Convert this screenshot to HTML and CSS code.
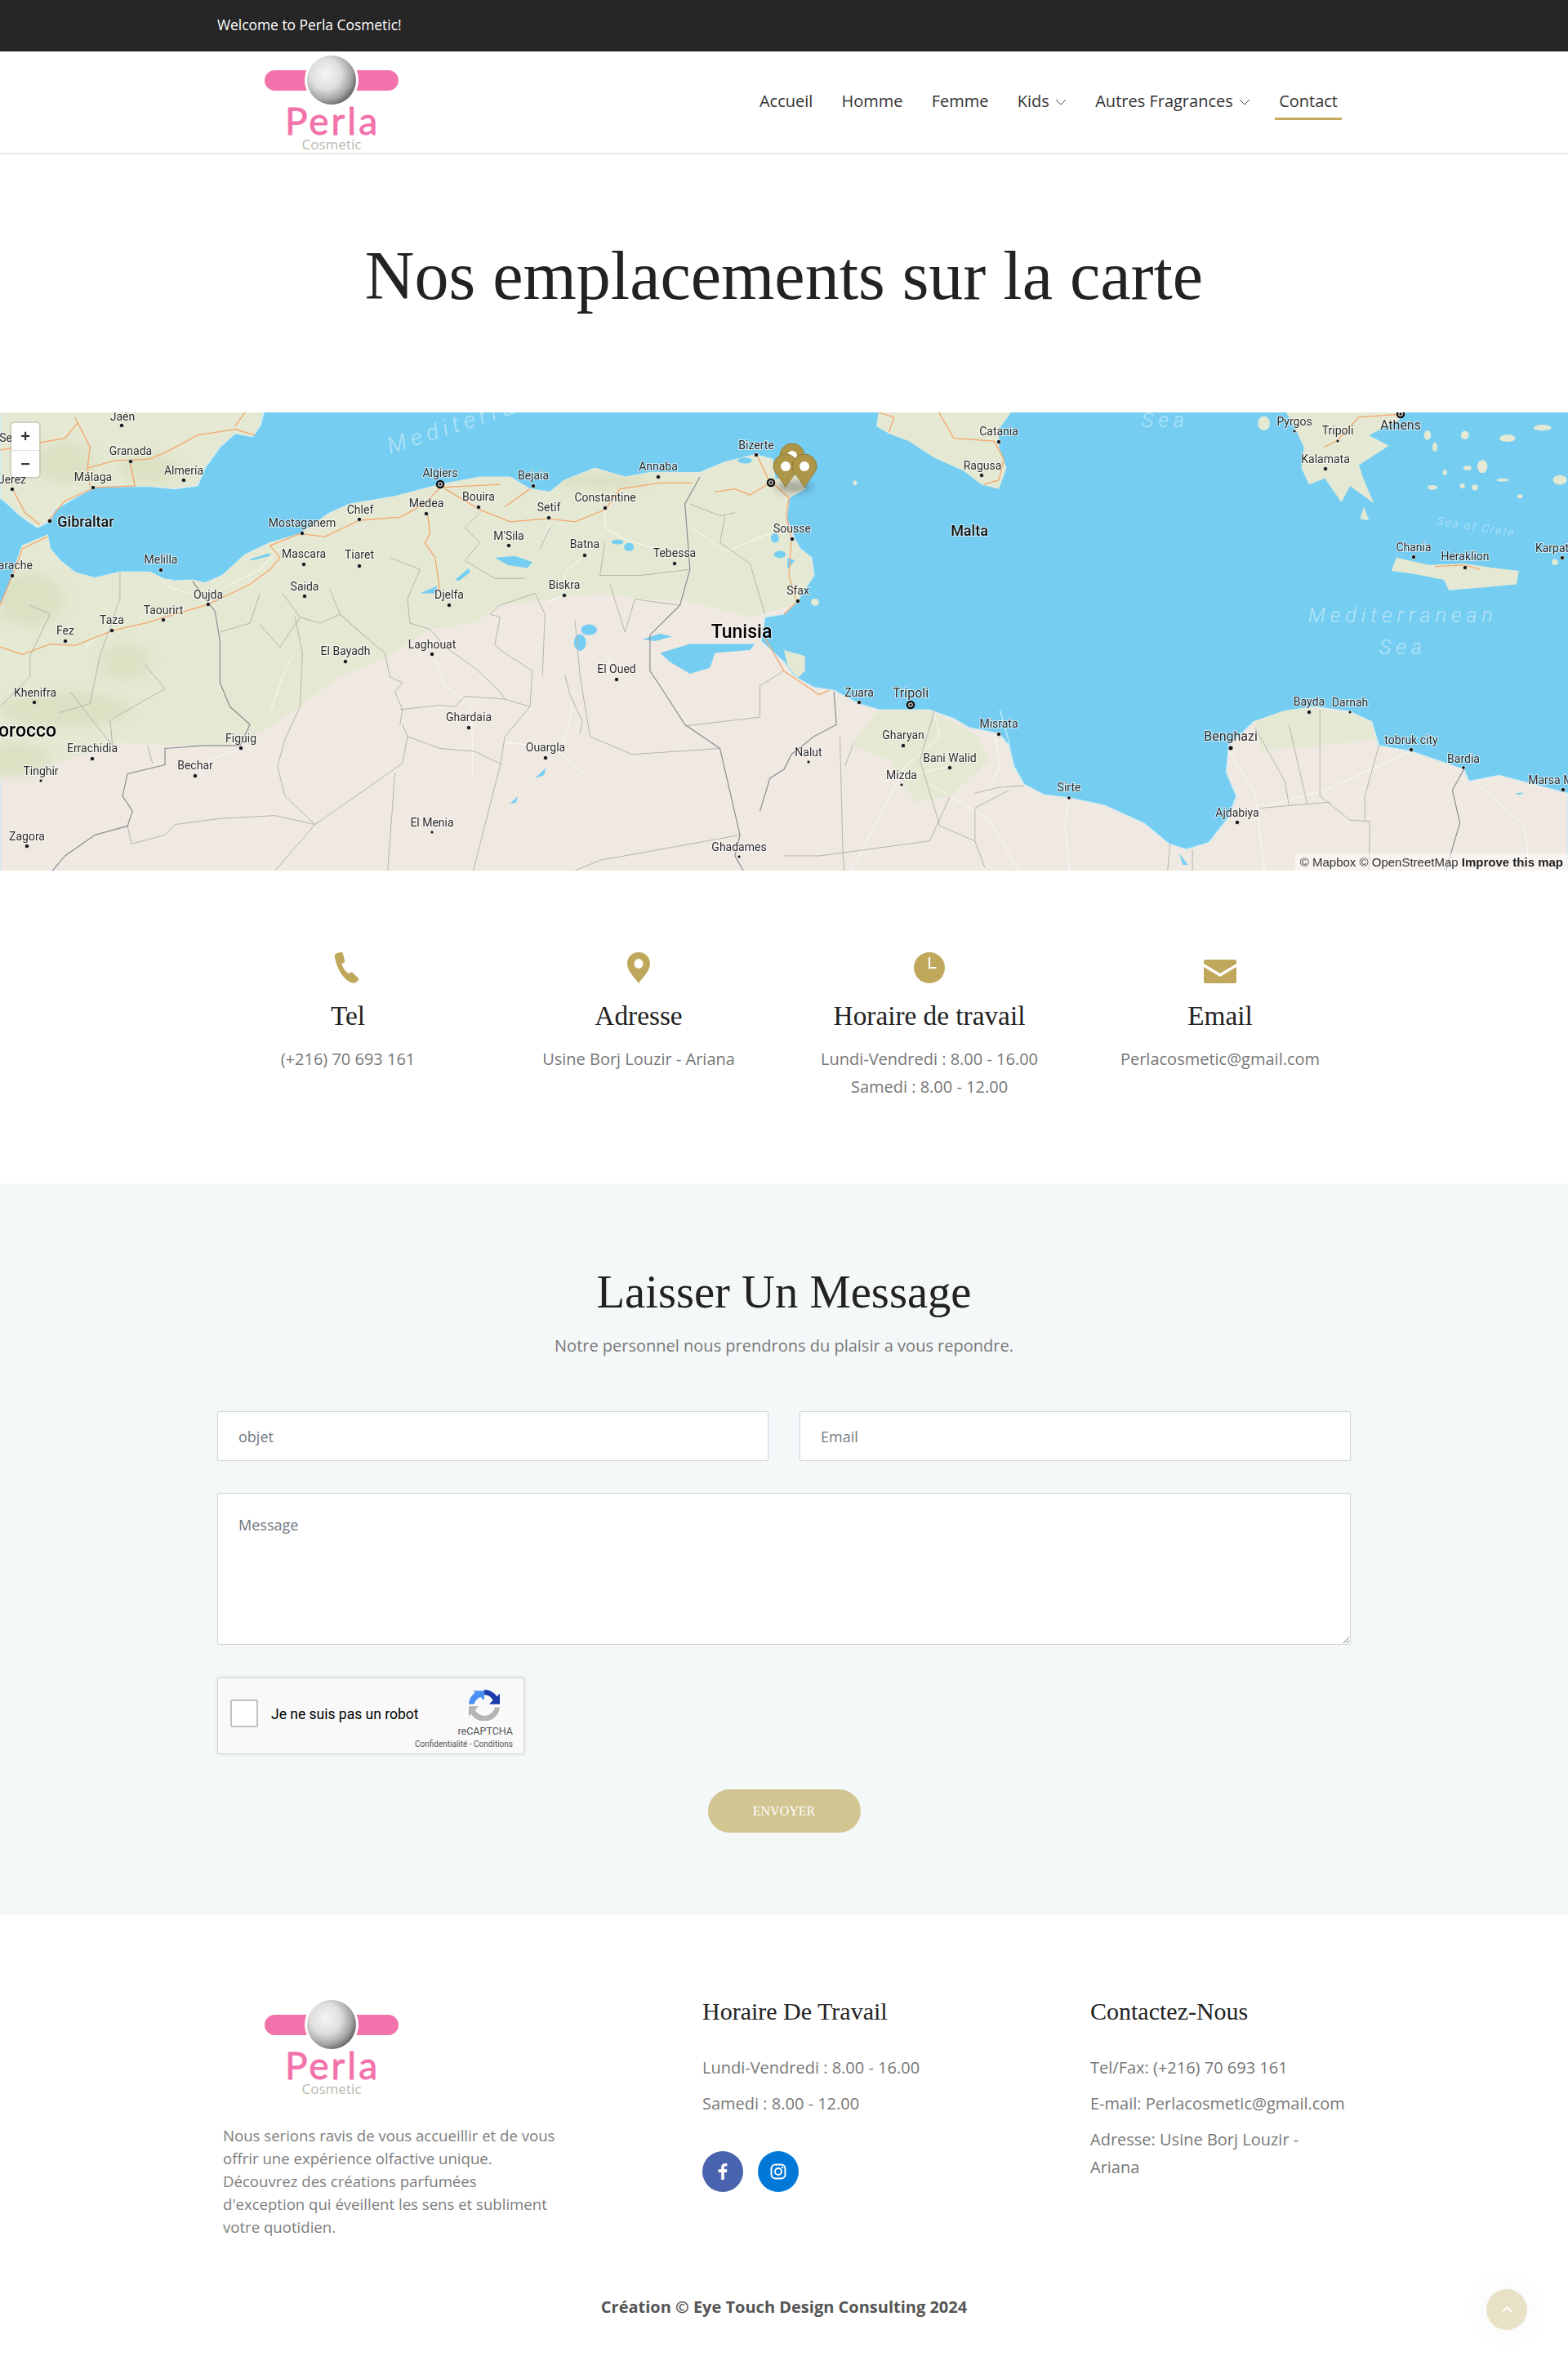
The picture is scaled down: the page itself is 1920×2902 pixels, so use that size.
FILE: index.html
```html
<!DOCTYPE html>
<html lang="fr">
<head>
  <meta charset="UTF-8">
  <meta name="viewport" content="width=device-width, initial-scale=1.0">
  <title>Contact - Perla Cosmetic</title>
  <link rel="stylesheet" href="styles.css">
</head>
<body>
  <div class="topbar"><div class="wrap">Welcome to Perla Cosmetic!</div></div>

  <header class="header">
    <div class="wrap header-row">
      <svg class="logo" viewBox="300 63 200 125">
        <defs>
          <radialGradient id="pearl" cx="38%" cy="38%" r="70%">
            <stop offset="0" stop-color="#f6f6f6"/>
            <stop offset=".45" stop-color="#dedede"/>
            <stop offset=".75" stop-color="#a5a5a5"/>
            <stop offset="1" stop-color="#555"/>
          </radialGradient>
        </defs>
        <rect class="logo-pill" x="324" y="86" width="70" height="25" rx="12.5"/>
        <rect class="logo-pill" x="418" y="86" width="70" height="25" rx="12.5"/>
        <circle class="logo-halo" cx="406" cy="98" r="33"/>
        <circle cx="406" cy="98" r="30" fill="url(#pearl)"/>
        <text class="logo-name" x="407" y="165">Perla</text>
        <text class="logo-sub" x="406" y="183">Cosmetic</text>
      </svg>
      <nav class="nav">
        <a href="#">Accueil</a>
        <a href="#">Homme</a>
        <a href="#">Femme</a>
        <a href="#">Kids <svg class="caret" viewBox="0 0 14 8"><path d="M1 1l6 6 6-6"/></svg></a>
        <a href="#">Autres Fragrances <svg class="caret" viewBox="0 0 14 8"><path d="M1 1l6 6 6-6"/></svg></a>
        <a href="#" class="active">Contact</a>
      </nav>
    </div>
  </header>

  <section class="hero"><h1>Nos emplacements sur la carte</h1></section>

  <section class="map">
    <svg class="map-svg" viewBox="0 505 1920 561">
      <defs>
        <path id="landShape" d="M0 660L20 590 30 530 45 460 95 425 100 470 120 510 150 550 190 568 240 548 300 548 325 570 350 578 385 575 410 585 445 560 490 490 540 450 600 420 660 350 700 320 790 295 880 255 960 230 1020 230 1060 270 1100 280 1130 240 1190 200 1250 230 1300 215 1400 215 1450 180 1510 155 1545 170 1550 240 1590 215 1610 270 1578 300 1573 370 1590 440 1600 470 1623 500 1628 560 1608 610 1593 650 1568 690 1530 700 1522 780 1568 850 1590 900 1628 935 1668 945 1718 990 1758 1010 1818 1010 1858 1010 1908 1040 1938 1070 1998 1090 2018 1130 2028 1200 2048 1260 2088 1295 2138 1305 2208 1330 2288 1390 2338 1460 2373 1478 2418 1455 2458 1370 2473 1300 2453 1220 2458 1130 2508 1050 2568 1015 2628 1000 2698 1015 2743 1050 2758 1130 2823 1150 2928 1210 2938 1250 2998 1230 3136 1290V1560H0Z"/>
        <path id="spainShape" d="M0 0H530L520 60 505 95 470 85 440 130 410 200 395 260 350 270 300 262 270 262 190 265 150 300 110 340 100 378 75 400 40 360 15 320 0 300Z"/>
        <clipPath id="landClip"><use href="#landShape"/></clipPath>
        <clipPath id="spainClip"><use href="#spainShape"/></clipPath>
        <filter id="soft"><feGaussianBlur stdDeviation="14"/></filter>
        <filter id="pinShadow" x="-50%" y="-50%" width="200%" height="200%"><feGaussianBlur stdDeviation="4"/></filter>
      </defs>
      <rect class="sea" x="0" y="505" width="1920" height="561"/>
      <g transform="translate(0 500) scale(.6122 .3653)">
        <use class="land" href="#landShape"/>
        <use class="land green-land" href="#spainShape"/>
        <g clip-path="url(#landClip)">
          <path class="green" d="M0 1240L130 1180 240 1120 330 1130 450 1130 520 1090 600 1000 680 900 780 830 860 740 950 720 1000 660 1100 640 1200 620 1280 640 1360 640 1500 700 1568 670 1700 600V150H0Z"/>
          <path class="green" d="M1758 1010L1840 1000 1950 1090 1980 1180 1900 1300 1830 1320 1780 1180 1700 1130Z"/>
          <path class="green" d="M2510 1040L2600 1000 2740 1030 2760 1110 2640 1130 2520 1150Z"/>
          <g filter="url(#soft)">
            <ellipse class="shade" cx="60" cy="640" rx="70" ry="90"/>
            <ellipse class="shade" cx="130" cy="1010" rx="130" ry="60"/>
            <ellipse class="shade" cx="30" cy="1180" rx="70" ry="60"/>
            <ellipse class="shade" cx="250" cy="850" rx="50" ry="60"/>
            <ellipse class="shade" cx="1200" cy="240" rx="100" ry="30"/>
          </g>
        </g>
        <g clip-path="url(#spainClip)">
          <g filter="url(#soft)">
            <ellipse class="shade" cx="300" cy="200" rx="60" ry="50"/>
            <ellipse class="shade" cx="130" cy="180" rx="60" ry="70"/>
          </g>
        </g>
        <!-- sicily, greece, crete and the small islands -->
        <path class="green" d="M1758 0L1753 60 1778 85 1818 110 1868 165 1928 210 1963 255 1998 270 2013 200 1998 130 1998 70 2028 0Z"/>
        <path class="green" d="M2568 0L2588 60 2608 130 2603 200 2618 255 2650 235 2683 315 2700 260 2748 318 2728 240 2718 190 2778 125 2738 90 2798 40 2818 0Z"/>
        <path class="green" d="M2728 330L2738 375 2720 370Z"/>
        <path class="green" d="M2783 545L2793 500 2858 525 2928 520 2988 535 3038 545 3033 590 2968 600 2898 610 2888 575 2828 555Z"/>
        <path class="green" d="M1568 810L1610 830 1610 880 1595 905 1575 860Z"/>
        <g class="isle">
          <ellipse cx="2528" cy="50" rx="12" ry="24"/><ellipse cx="2855" cy="90" rx="7" ry="16"/><ellipse cx="2930" cy="90" rx="8" ry="14"/>
          <ellipse cx="2965" cy="195" rx="10" ry="22"/><ellipse cx="3015" cy="100" rx="16" ry="12"/><ellipse cx="2870" cy="130" rx="5" ry="16"/>
          <ellipse cx="2935" cy="200" rx="8" ry="8"/><ellipse cx="2890" cy="215" rx="4" ry="10"/><ellipse cx="3005" cy="240" rx="12" ry="5"/>
          <ellipse cx="2950" cy="265" rx="6" ry="10"/><ellipse cx="2865" cy="265" rx="10" ry="8"/><ellipse cx="3085" cy="65" rx="18" ry="10"/>
          <ellipse cx="3120" cy="240" rx="14" ry="16"/><ellipse cx="3040" cy="295" rx="5" ry="7"/><ellipse cx="2925" cy="260" rx="5" ry="8"/>
          <ellipse cx="1710" cy="250" rx="4" ry="8"/><ellipse cx="1630" cy="650" rx="8" ry="12"/><ellipse cx="3110" cy="515" rx="6" ry="10"/>
        </g>
        <!-- lakes -->
        <g class="water">
          <path d="M1320 820L1380 790 1420 790 1510 790 1500 810 1430 820 1420 870 1380 890 1340 850Z"/>
          <path d="M990 500L1030 495 1065 515 1055 535 1015 525Z"/>
          <ellipse cx="1178" cy="742" rx="16" ry="18"/><ellipse cx="1160" cy="785" rx="12" ry="28"/>
          <path d="M1285 775L1320 755 1345 765 1310 780Z"/>
          <path d="M910 575L938 535 940 550 918 578Z"/><path d="M840 620L875 595 870 620Z"/>
          <ellipse cx="1258" cy="465" rx="10" ry="14"/><ellipse cx="1235" cy="448" rx="12" ry="8"/>
          <path d="M500 505L540 485 540 495 505 510Z"/><path d="M1070 1240L1092 1205 1088 1230Z"/>
          <path d="M1020 1325L1036 1300 1032 1322Z"/><path d="M3030 1290L3048 1288 3040 1296Z"/>
          <path d="M2358 1490L2376 1530 2366 1530Z"/><ellipse cx="1490" cy="175" rx="14" ry="10"/>
          <ellipse cx="1560" cy="490" rx="12" ry="12"/><ellipse cx="1550" cy="435" rx="8" ry="16"/>
          <path d="M1575 500L1590 510 1575 540Z"/>
        </g>
        <!-- minor roads -->
        <g class="minor">
          <polyline points="320,570 340,600 380,620 417,660"/><polyline points="1100,380 1090,430"/><polyline points="1210,340 1210,400 1250,440 1310,470"/>
          <polyline points="1170,490 1130,550 1128,625 1095,650"/><polyline points="870,840 890,930 940,990 945,1100 945,1230"/>
          <polyline points="1130,1120 1110,1140 1168,1225"/><polyline points="1145,1000 1125,1140 1010,1120"/><polyline points="480,1140 420,1180 400,1230"/>
          <polyline points="585,830 560,920 540,1020"/><polyline points="1215,830 1230,905"/><polyline points="240,650 215,740 170,800"/>
          <polyline points="1990,1090 2000,1200 1970,1300"/><polyline points="1868,1010 1880,1100 1810,1200 1700,1560"/><polyline points="2138,1305 2130,1400 2140,1560"/>
          <polyline points="2458,1150 2510,1290 2530,1560"/><polyline points="2820,1150 2650,1280 2520,1340"/><polyline points="2950,1250 3050,1400 3060,1560"/>
          <polyline points="1860,1260 1980,1380 2040,1560"/><polyline points="2000,1010 2020,1130"/><polyline points="1770,1250 1900,1200"/>
          <polyline points="450,600 520,540 560,470"/><polyline points="1385,400 1450,480 1540,420"/>
        </g>
        <!-- provinces -->
        <g class="border-thin">
          <polyline points="240,550 240,640 200,830 180,990 120,1020"/><polyline points="60,660 100,690 60,830 60,900 0,1000"/><polyline points="220,1040 225,1130 140,950"/><polyline points="290,860 330,940 225,1040"/>
          <polyline points="520,620 500,720 440,750"/><polyline points="520,725 560,800 600,700 640,720 680,690 720,750 770,820 780,900 805,920 790,950 805,1010 800,1060"/>
          <polyline points="565,620 600,700"/><polyline points="660,610 680,690 720,750"/><polyline points="780,500 840,540 815,640 820,720 860,740 890,800 950,870 1000,950 1010,975"/>
          <polyline points="1060,1000 1065,880 1000,810 990,790 1000,700 980,690 1000,660 1070,620 1090,690"/><polyline points="1090,690 1085,895"/>
          <polyline points="960,350 930,400 960,450 930,510 990,570 1050,570"/><polyline points="1220,590 1250,750 1270,640 1360,660"/><polyline points="1210,450 1200,560 1280,560 1380,540"/>
          <polyline points="1100,400 1080,470"/><polyline points="1150,710 1160,895 1180,1100 1265,1160 1440,1140"/><polyline points="1130,895 1140,960 1165,1050 1160,1090"/>
          <polyline points="1370,1065 1520,1035 1520,930 1568,880"/><polyline points="1480,1430 1200,1515 1135,1560"/><polyline points="1010,1100 1000,1200 945,1560"/>
          <polyline points="800,1010 880,995 910,1000 930,965 1010,975 1060,1000 1010,1100"/><polyline points="805,1060 815,1100 880,1140 950,1150 1005,1195"/>
          <polyline points="815,1100 805,1190 630,1395 545,1560"/><polyline points="790,1220 775,1560"/><polyline points="630,1395 550,1365 440,1375 350,1395 330,1430 263,1460 255,1400"/>
          <polyline points="630,1395 570,1300 555,1200 570,1110 600,1000 605,820 590,700"/><polyline points="295,1130 305,1190"/>
          <polyline points="1450,360 1440,450 1500,520 1530,690"/><polyline points="1380,320 1440,360 1470,350"/><polyline points="1680,1100 1686,1500 1690,1560"/><polyline points="1706,1130 1690,1200"/>
          <polyline points="1870,1010 1840,1180 1880,1400 1950,1450 1970,1540"/><polyline points="1950,1290 2000,1270 2048,1265"/><polyline points="2018,1280 1950,1340 1950,1450"/>
          <polyline points="2510,1070 2570,1250 2578,1330"/><polyline points="2578,1060 2600,1220 2615,1330"/><polyline points="2640,1010 2640,1300 2700,1380 2740,1385 2738,1560"/>
          <polyline points="2520,1340 2660,1320"/><polyline points="2758,1130 2730,1300 2730,1385"/><polyline points="2340,1460 2335,1560"/><polyline points="2385,1480 2385,1560"/>
          <polyline points="1568,1500 1640,1500 1860,1450"/><polyline points="1860,1450 1900,1300"/>
        </g>
        <!-- country borders -->
        <g class="border">
          <polyline points="385,580 430,680 440,780 440,920 460,1000 500,1060 480,1130 410,1130 330,1140 330,1195 255,1225 245,1300 265,1350 255,1400 190,1430 130,1500 100,1560"/>
          <polyline points="1400,230 1370,320 1380,540 1360,660 1300,760 1300,880 1320,930 1370,1060 1440,1140 1480,1430 1470,1500 1490,1560"/>
          <polyline points="1668,950 1673,1060 1628,1100 1583,1160 1568,1210 1540,1240 1520,1350"/>
          <polyline points="2928,1210 2905,1280 2920,1390 2890,1560"/>
        </g>
        <!-- main roads -->
        <g class="road">
          <polyline points="150,30 180,130 175,200 230,175 300,170 340,140 395,90 470,70 510,90"/><polyline points="0,140 80,115 130,100 155,50"/><polyline points="490,14 470,60"/>
          <polyline points="260,180 270,260 190,265 130,310 100,370"/><polyline points="25,270 50,350 80,390"/><polyline points="175,200 180,260"/>
          <polyline points="0,660 30,540 45,470 95,430"/>
          <polyline points="0,800 45,825 100,790 150,795 225,745 290,720 330,700 415,658 500,590 540,540 560,500 540,460 600,420 650,430 720,375 800,365 850,320 880,265 1000,255"/>
          <polyline points="890,270 960,340 1020,380 1095,370 1150,380 1210,340 1240,270 1320,250 1385,250"/>
          <polyline points="855,350 860,420 850,450 870,500 880,610"/><polyline points="1010,330 1060,270"/><polyline points="1430,280 1470,270 1500,290 1540,250 1515,160"/>
          <polyline points="1545,250 1578,300 1573,360 1583,440 1578,560 1593,650 1568,690"/><polyline points="1530,770 1568,880 1638,960 1658,945"/>
          <polyline points="1758,14 1788,30 1778,80"/><polyline points="1878,14 1908,100 1988,110 2008,170 1998,240 1968,255"/>
          <polyline points="2648,130 2673,110 2718,30 2798,20"/>
          <polyline points="2870,530 2930,525 2960,540"/>
        </g>
      </g>

      <g class="labels">
        <text x="150" y="515">Jaén</text><text x="160" y="557">Granada</text><text x="225" y="581">Almería</text><text x="114" y="589">Málaga</text>
        <text x="15" y="592">Jerez</text><text x="7" y="541">Se</text><text x="539" y="584">Algiers</text><text x="653" y="587">Bejaia</text>
        <text x="806" y="576">Annaba</text><text x="926" y="550">Bizerte</text><text x="586" y="613">Bouira</text><text x="741" y="614">Constantine</text>
        <text x="672" y="626">Setif</text><text x="522" y="621">Medea</text><text x="441" y="629">Chlef</text><text x="370" y="645">Mostaganem</text>
        <text x="372" y="683">Mascara</text><text x="440" y="684">Tiaret</text><text x="623" y="661">M'Sila</text><text x="716" y="671">Batna</text>
        <text x="826" y="682">Tebessa</text><text x="197" y="690">Melilla</text><text x="15" y="697">Larache</text><text x="373" y="723">Saida</text>
        <text x="691" y="721">Biskra</text><text x="255" y="733">Oujda</text><text x="550" y="733">Djelfa</text><text x="200" y="752">Taourirt</text>
        <text x="137" y="764">Taza</text><text x="80" y="777">Fez</text><text x="423" y="802">El Bayadh</text><text x="529" y="794">Laghouat</text>
        <text x="755" y="824">El Oued</text><text x="43" y="853">Khenifra</text><text x="574" y="883">Ghardaia</text><text x="295" y="909">Figuig</text>
        <text x="113" y="921">Errachidia</text><text x="668" y="920">Ouargla</text><text x="239" y="942">Bechar</text><text x="50" y="949">Tinghir</text>
        <text x="529" y="1012">El Menia</text><text x="33" y="1029">Zagora</text><text x="905" y="1042">Ghadames</text>
        <text x="970" y="652">Sousse</text><text x="977" y="728">Sfax</text><text x="1223" y="533">Catania</text><text x="1203" y="575">Ragusa</text>
        <text x="1585" y="521">Pyrgos</text><text x="1638" y="532">Tripoli</text><text x="1623" y="567">Kalamata</text><text x="1731" y="675">Chania</text>
        <text x="1794" y="686">Heraklion</text><text x="1912" y="676">Karpathos</text><text x="1052" y="853">Zuara</text><text x="1223" y="891">Misrata</text>
        <text x="1603" y="864">Bayda</text><text x="1653" y="865">Darnah</text><text x="1728" y="911">tobruk city</text><text x="1792" y="934">Bardia</text>
        <text x="1915" y="960">Marsa Matruh</text><text x="1106" y="905">Gharyan</text><text x="990" y="926">Nalut</text><text x="1163" y="933">Bani Walid</text>
        <text x="1104" y="954">Mizda</text><text x="1309" y="969">Sirte</text><text x="1515" y="1000">Ajdabiya</text>
        <text class="label-md" x="105" y="645">Gibraltar</text><text class="label-md" x="1187" y="656">Malta</text>
        <text class="label-city" x="1715" y="526">Athens</text><text class="label-city" x="1115" y="854">Tripoli</text><text class="label-city" x="1507" y="907">Benghazi</text>
        <text class="label-lg" x="908" y="781">Tunisia</text><text class="label-lg label-end" x="69" y="902">Morocco</text>
      </g>
      <g class="sea-labels">
        <text class="sea-lg" x="1718" y="762">Mediterranean</text><text class="sea-lg" x="1718" y="801">Sea</text>
        <text class="sea-lg" x="1427" y="523">Sea</text>
        <text class="sea-top" transform="rotate(-18 478 556)" x="478" y="556">Mediterranean</text>
        <text class="sea-sm" transform="rotate(9 1808 644)" x="1808" y="650">Sea of Crete</text>
      </g>
      <g class="dots">
        <circle cx="149" cy="521" r="2.6"/><circle cx="160" cy="565" r="2.6"/><circle cx="225" cy="588" r="2.6"/><circle cx="114" cy="597" r="2.6"/>
        <circle cx="15" cy="599" r="2.6"/><circle cx="61" cy="638" r="2.8"/><circle cx="653" cy="595" r="2.6"/><circle cx="806" cy="584" r="2.6"/>
        <circle cx="926" cy="557" r="2.6"/><circle cx="586" cy="621" r="2.6"/><circle cx="741" cy="622" r="2.6"/><circle cx="672" cy="634" r="2.6"/>
        <circle cx="522" cy="629" r="2.6"/><circle cx="440" cy="636" r="2.6"/><circle cx="370" cy="653" r="2.6"/><circle cx="372" cy="691" r="2.6"/>
        <circle cx="440" cy="693" r="2.6"/><circle cx="623" cy="668" r="2.6"/><circle cx="716" cy="680" r="2.6"/><circle cx="826" cy="690" r="2.6"/>
        <circle cx="197" cy="698" r="2.6"/><circle cx="15" cy="705" r="2.6"/><circle cx="373" cy="730" r="2.6"/><circle cx="691" cy="729" r="2.6"/>
        <circle cx="255" cy="740" r="2.6"/><circle cx="550" cy="741" r="2.6"/><circle cx="200" cy="759" r="2.6"/><circle cx="137" cy="772" r="2.6"/>
        <circle cx="80" cy="785" r="2.6"/><circle cx="423" cy="810" r="2.6"/><circle cx="529" cy="801" r="2.6"/><circle cx="755" cy="832" r="2.6"/>
        <circle cx="42" cy="860" r="2.6"/><circle cx="574" cy="891" r="2.6"/><circle cx="295" cy="916" r="2.6"/><circle cx="113" cy="929" r="2.6"/>
        <circle cx="668" cy="928" r="2.6"/><circle cx="239" cy="950" r="2.6"/><circle cx="50" cy="956" r="2"/><circle cx="529" cy="1019" r="2"/>
        <circle cx="33" cy="1036" r="2.6"/><circle cx="905" cy="1049" r="2"/><circle cx="970" cy="660" r="2.6"/><circle cx="977" cy="736" r="2.6"/>
        <circle cx="1223" cy="541" r="2.6"/><circle cx="1202" cy="582" r="2.6"/><circle cx="1585" cy="528" r="2"/><circle cx="1638" cy="540" r="2"/>
        <circle cx="1623" cy="574" r="2.6"/><circle cx="1731" cy="682" r="2.6"/><circle cx="1794" cy="695" r="2.6"/><circle cx="1913" cy="683" r="2.6"/>
        <circle cx="1052" cy="860" r="2.6"/><circle cx="1223" cy="899" r="2.6"/><circle cx="1603" cy="872" r="2.6"/><circle cx="1653" cy="872" r="2"/>
        <circle cx="1507" cy="916" r="3"/><circle cx="1728" cy="918" r="2.6"/><circle cx="1792" cy="940" r="2.2"/><circle cx="1914" cy="967" r="2.6"/>
        <circle cx="1106" cy="913" r="2.6"/><circle cx="990" cy="933" r="2"/><circle cx="1163" cy="940" r="2.6"/><circle cx="1104" cy="961" r="2"/>
        <circle cx="1309" cy="977" r="2.2"/><circle cx="1515" cy="1007" r="2.6"/>
      </g>
      <g class="rings">
        <circle cx="539" cy="593" r="4"/><circle cx="944" cy="591" r="4"/><circle cx="1715" cy="507" r="4"/><circle cx="1115" cy="863" r="4"/>
      </g>
      <g class="ring-core">
        <circle cx="539" cy="593" r="1.7"/><circle cx="944" cy="591" r="1.7"/><circle cx="1715" cy="507" r="1.7"/><circle cx="1115" cy="863" r="1.7"/>
      </g>
      <!-- markers -->
      <ellipse class="pin-shadow" cx="972" cy="596" rx="22" ry="7" filter="url(#pinShadow)"/>
      <g class="pin" transform="translate(970 558)"><path d="M0 26C-6 14-15 8-15 0A15 15 0 0 1 15 0C15 8 6 14 0 26Z"/><circle r="6"/></g>
      <g class="pin" transform="translate(962 571)"><path d="M0 26C-6 14-15 8-15 0A15 15 0 0 1 15 0C15 8 6 14 0 26Z"/><circle r="6"/></g>
      <g class="pin" transform="translate(985 571)"><path d="M0 26C-6 14-15 8-15 0A15 15 0 0 1 15 0C15 8 6 14 0 26Z"/><circle r="6"/></g>
    </svg>
    <div class="zoom-ctrl"><button>+</button><button>−</button></div>
    <div class="attrib">© Mapbox © OpenStreetMap <b>Improve this map</b></div>
  </section>

  <section class="info">
    <div class="info-col">
      <svg class="info-icon" viewBox="0 0 38 36"><path d="M3 5C2 2 4 1 6 0l4-1c2 0 2.500 0 3 2l2 8c.5 1.500 0 2.500-1 3l-2.500 1c0 3 5 11 9 12l2-1.500c1-.5 2 0 3 1l6 6c1 1 1 2 0 3l-2 2c-2 1.500-5 1.500-7 .5C13 32 5 18 3 5Z"/></svg>
      <h3>Tel</h3>
      <p>(+216) 70 693 161</p>
    </div>
    <div class="info-col">
      <svg class="info-icon" viewBox="0 0 28 38"><path fill-rule="evenodd" d="M14 0C6 0 0 6 0 14c0 9 9 17 14 24 5-7 14-15 14-24C28 6 22 0 14 0Zm0 8a5.500 6 0 1 1 0 12 5.500 6 0 0 1 0-12Z"/></svg>
      <h3>Adresse</h3>
      <p>Usine Borj Louzir - Ariana</p>
    </div>
    <div class="info-col">
      <svg class="info-icon" viewBox="0 0 36 36"><path fill-rule="evenodd" d="M18 0a18 18 0 1 1 0 36 18 18 0 0 1 0-36Zm-1 6v13h9v-2h-7V6Z"/></svg>
      <h3>Horaire de travail</h3>
      <p>Lundi-Vendredi : 8.00 - 16.00<br>Samedi : 8.00 - 12.00</p>
    </div>
    <div class="info-col">
      <svg class="info-icon icon-mail" viewBox="0 0 40 29"><path d="M2 0h36c1 0 2 1 2 2v3L20 17 0 5V2C0 1 1 0 2 0Zm-2 9l20 12L40 9v18c0 1-1 2-2 2H2c-1 0-2-1-2-2Z"/></svg>
      <h3>Email</h3>
      <p>Perlacosmetic@gmail.com</p>
    </div>
  </section>

  <section class="message">
    <h2>Laisser Un Message</h2>
    <p class="message-sub">Notre personnel nous prendrons du plaisir a vous repondre.</p>
    <form class="form">
      <div class="form-row">
        <input type="text" placeholder="objet">
        <input type="text" placeholder="Email">
      </div>
      <textarea placeholder="Message"></textarea>
      <div class="captcha">
        <span class="captcha-box"></span>
        <span class="captcha-label">Je ne suis pas un robot</span>
        <div class="captcha-brand">
          <svg class="captcha-logo" viewBox="0 0 64 64">
            <path fill="#b4b4b4" d="M0 34H20L13 42A22 22 0 0 0 54 36H64A32 32 0 0 1 5 50L0 55Z"/>
            <path fill="#4a90f4" d="M0 30A32 32 0 0 1 13 6L9 2H32V22L24 15A22 22 0 0 0 11 30Z"/>
            <path fill="#1c3aa9" d="M32 0A32 32 0 0 1 58 14L64 8V30H42L50 22A22 22 0 0 0 32 10Z"/>
          </svg>
          <span class="captcha-name">reCAPTCHA</span>
          <span class="captcha-links">Confidentialité - Conditions</span>
        </div>
      </div>
      <button type="button" class="send">ENVOYER</button>
    </form>
  </section>

  <footer class="footer">
    <div class="wrap footer-grid">
      <div>
        <svg class="logo" viewBox="300 63 200 125">
          <rect class="logo-pill" x="324" y="86" width="70" height="25" rx="12.5"/>
          <rect class="logo-pill" x="418" y="86" width="70" height="25" rx="12.5"/>
          <circle class="logo-halo" cx="406" cy="98" r="33"/>
          <circle cx="406" cy="98" r="30" fill="url(#pearl)"/>
          <text class="logo-name" x="407" y="165">Perla</text>
          <text class="logo-sub" x="406" y="183">Cosmetic</text>
        </svg>
        <p class="footer-about">Nous serions ravis de vous accueillir et de vous offrir une expérience olfactive unique. Découvrez des créations parfumées d'exception qui éveillent les sens et subliment votre quotidien.</p>
      </div>
      <div>
        <h4>Horaire De Travail</h4>
        <p class="footer-line">Lundi-Vendredi : 8.00 - 16.00</p>
        <p class="footer-line">Samedi : 8.00 - 12.00</p>
        <div class="social">
          <a href="#" class="fb"><svg viewBox="0 0 12 22"><path d="M8 22V12h3.400l.6-4H8V5.500C8 4.300 8.400 3.600 10 3.600h2V.2C11.600.1 10.500 0 9.200 0 6.300 0 4 1.800 4 5v3H0v4h4v10Z"/></svg></a>
          <a href="#" class="ig"><svg viewBox="0 0 20 20"><rect class="ig-line" x="1.500" y="1.500" width="17" height="17" rx="5"/><circle class="ig-line" cx="10" cy="10" r="4"/><circle cx="15" cy="5" r="1.200"/></svg></a>
        </div>
      </div>
      <div>
        <h4>Contactez-Nous</h4>
        <p class="footer-line">Tel/Fax: (+216) 70 693 161</p>
        <p class="footer-line">E-mail: Perlacosmetic@gmail.com</p>
        <p class="footer-line">Adresse: Usine Borj Louzir - Ariana</p>
      </div>
    </div>
    <p class="copyright">Création © Eye Touch Design Consulting 2024</p>
  </footer>

  <a href="#" class="to-top"><svg viewBox="0 0 14 8"><path d="M1 7l6-6 6 6"/></svg></a>
</body>
</html>
```

FILE: styles.css
```css
* {
  box-sizing: border-box;
}
body {
  margin: 0;
  position: relative;
  font-family: "Open Sans", Arial, sans-serif;
  font-size: 20px;
  color: #777;
  background: #fff;
}
h1, h2, h3, h4, p {
  margin: 0;
  font-weight: 400;
}
a {
  color: inherit;
  text-decoration: none;
}
.wrap {
  width: 1388px;
  margin: 0 auto;
}

/* top */
.topbar {
  height: 63px;
  background: #262626;
  color: #fff;
  font-size: 17.4px;
  line-height: 61px;
}
.header {
  height: 126px;
  border-bottom: 2px solid #e6e6e6;
}
.header-row {
  display: flex;
  justify-content: space-between;
}
.logo {
  display: block;
  width: 200px;
  height: 125px;
  margin-left: 34px;
}
.logo-pill {
  fill: #f273ab;
}
.logo-halo {
  fill: #fff;
}
.logo-name {
  font-family: Lato, sans-serif;
  font-size: 46px;
  fill: #f273ab;
  stroke: #f273ab;
  stroke-width: .8px;
  stroke-linejoin: round;
  text-anchor: middle;
  letter-spacing: 3px;
}
.logo-sub {
  font-size: 17px;
  fill: #b9baae;
  text-anchor: middle;
}
.nav {
  display: flex;
  gap: 25.2px;
  padding-right: 11px;
  color: #333;
  font-size: 20px;
}
.nav a {
  display: block;
  height: 84px;
  line-height: 122px;
  padding: 0 5px;
}
.nav a.active {
  border-bottom: 3px solid #c2a858;
}
.caret {
  width: 14px;
  height: 8px;
  margin-left: 2px;
  vertical-align: 2px;
}
.caret path {
  fill: none;
  stroke: #444;
  stroke-width: 1;
}

.hero {
  height: 316px;
  text-align: center;
}
.hero h1 {
  padding-top: 99px;
  font-family: "Liberation Serif", serif;
  font-size: 84px;
  line-height: 100px;
  color: #222;
}

/* map */
.map {
  position: relative;
  height: 561px;
  overflow: hidden;
}
.map-svg {
  display: block;
  width: 1920px;
  height: 561px;
}
.sea {
  fill: #75cef2;
}
.land {
  fill: #efe9e2;
  stroke: #cfeaf3;
  stroke-width: 3;
}
.green-land {
  fill: #e5e9d3;
}
.green {
  fill: #e5e9d3;
  stroke: none;
}
.shade {
  fill: #d3d9b5;
  opacity: .5;
}
.isle ellipse {
  fill: #e5e9d3;
}
.water path, .water ellipse {
  fill: #75cef2;
}
.minor polyline, .border-thin polyline, .border polyline, .road polyline {
  fill: none;
  vector-effect: non-scaling-stroke;
}
.minor polyline {
  stroke: #fff;
  stroke-width: 1;
  opacity: .8;
}
.border-thin polyline {
  stroke: #b4b5ad;
  stroke-width: 1;
}
.border polyline {
  stroke: #8c8d92;
  stroke-width: 1.2;
}
.road polyline {
  stroke: #f4a66d;
  stroke-width: 1.3;
}
.labels text {
  font-family: Roboto, sans-serif;
  font-size: 14px;
  fill: #2c2c2c;
  stroke: rgba(255, 255, 255, .65);
  stroke-width: 2px;
  paint-order: stroke;
  text-anchor: middle;
}
.labels .label-md {
  font-size: 18px;
  font-weight: 500;
  fill: #111;
}
.labels .label-city {
  font-size: 16px;
}
.labels .label-lg {
  font-size: 23px;
  font-weight: 500;
  fill: #000;
}
.labels .label-end {
  text-anchor: end;
}
.sea-labels text {
  font-family: Roboto, sans-serif;
  font-weight: 300;
  fill: #b9e4f6;
  text-anchor: middle;
}
.sea-lg {
  font-size: 25px;
  font-style: italic;
  letter-spacing: 6px;
}
.sea-labels .sea-top {
  font-size: 28px;
  font-style: italic;
  letter-spacing: 6px;
  text-anchor: start;
}
.sea-sm {
  font-size: 14px;
  font-style: italic;
  letter-spacing: 2px;
}
.dots circle {
  fill: #111;
  stroke: rgba(255, 255, 255, .7);
  stroke-width: 1px;
}
.rings circle {
  fill: #fff;
  stroke: #111;
  stroke-width: 2.5px;
}
.ring-core circle {
  fill: #111;
}
.pin path {
  fill: #ad9648;
  stroke: #8f7c3b;
  stroke-width: 1px;
}
.pin circle {
  fill: #fff;
}
.pin-shadow {
  fill: rgba(40, 40, 40, .35);
}
.zoom-ctrl {
  position: absolute;
  left: 14px;
  top: 13px;
  width: 34px;
  display: flex;
  flex-direction: column;
  background: #fff;
  border-radius: 4px;
  box-shadow: 0 0 0 2px rgba(0, 0, 0, .1);
}
.zoom-ctrl button {
  height: 33px;
  padding: 0;
  border: 0;
  background: none;
  font-family: "Liberation Sans", sans-serif;
  font-size: 20px;
  font-weight: 700;
  color: #333;
}
.zoom-ctrl button + button {
  border-top: 1px solid #ddd;
}
.attrib {
  position: absolute;
  right: 0;
  bottom: 0;
  height: 21px;
  padding: 0 6px;
  background: rgba(255, 255, 255, .5);
  font-family: "Liberation Sans", sans-serif;
  font-size: 15px;
  line-height: 21px;
  color: #333;
}
.attrib b {
  color: #222;
}

/* contact details */
.info {
  height: 383px;
  padding-top: 100px;
  display: grid;
  grid-template-columns: repeat(4, 356px);
  justify-content: center;
  text-align: center;
}
.info-icon {
  display: block;
  width: 38px;
  height: 38px;
  margin: 0 auto;
  fill: #bfa85c;
}
.icon-mail {
  width: 40px;
  height: 29px;
  margin-top: 9px;
}
.info h3 {
  margin-top: 20px;
  font-family: "Liberation Serif", serif;
  font-size: 33.3px;
  line-height: 40px;
  color: #222;
}
.info p {
  margin-top: 16px;
  line-height: 34px;
}

/* form */
.message {
  height: 896px;
  padding-top: 98px;
  background: #f5f8f9;
  text-align: center;
}
.message h2 {
  font-family: "Liberation Serif", serif;
  font-size: 56.6px;
  line-height: 70px;
  color: #222;
}
.message-sub {
  margin-top: 16px;
  line-height: 30px;
}
.form {
  width: 1388px;
  margin: 65px auto 0;
  text-align: left;
}
.form-row {
  display: grid;
  grid-template-columns: 675px 675px;
  justify-content: space-between;
}
.form input, .form textarea {
  display: block;
  width: 100%;
  padding: 0 25px;
  border: 1px solid #cdd3db;
  border-radius: 2px;
  background: #fff;
  font-family: "Open Sans", sans-serif;
  font-size: 18px;
}
.form input {
  height: 61px;
}
.form textarea {
  height: 186px;
  margin-top: 39px;
  padding-top: 26px;
}
.form ::placeholder {
  color: #737a82;
  opacity: 1;
}
.captcha {
  position: relative;
  width: 376px;
  height: 94px;
  margin-top: 40px;
  display: flex;
  align-items: center;
  background: #f9f9f9;
  border: 1px solid #d3d3d3;
  border-radius: 3px;
  box-shadow: 0 0 4px 1px rgba(0, 0, 0, .08);
  font-family: Roboto, sans-serif;
}
.captcha-box {
  width: 34px;
  height: 34px;
  margin: -6px 0 0 15px;
  background: #fff;
  border: 2px solid #c1c1c1;
  border-radius: 2px;
}
.captcha-label {
  margin: -4px 0 0 16px;
  font-size: 17.5px;
  color: #000;
}
.captcha-brand {
  position: absolute;
  right: 13px;
  top: 14px;
  display: flex;
  flex-direction: column;
  align-items: flex-end;
}
.captcha-logo {
  width: 38px;
  height: 38px;
  margin-right: 16px;
}
.captcha-name {
  margin-top: 5px;
  font-size: 12.5px;
  color: #555;
}
.captcha-links {
  margin-top: 3px;
  font-size: 10px;
  color: #555;
  white-space: nowrap;
}
.send {
  display: block;
  width: 187px;
  height: 53px;
  margin: 43px auto 0;
  border: 0;
  border-radius: 27px;
  background: #d2c591;
  font-family: "Liberation Serif", serif;
  font-size: 16px;
  color: #fff;
}

/* footer */
.footer {
  height: 557px;
  padding-top: 99px;
}
.footer-grid {
  display: grid;
  grid-template-columns: 594px 475px 319px;
  height: 282px;
}
.footer-about {
  width: 412px;
  margin: 32px 0 0 7px;
  font-size: 18.6px;
  line-height: 28px;
  color: #7d7d7d;
}
.footer h4 {
  margin-top: -1px;
  font-family: "Liberation Serif", serif;
  font-size: 30px;
  line-height: 40px;
  margin-bottom: 32px;
  color: #222;
}
.footer-line {
  margin-bottom: 10px;
  line-height: 34px;
}
.social {
  display: flex;
  gap: 18px;
  margin-top: 41px;
}
.social a {
  width: 50px;
  height: 50px;
  border-radius: 50%;
  display: flex;
  align-items: center;
  justify-content: center;
}
.social svg {
  height: 20px;
  width: 20px;
  fill: #fff;
}
.fb {
  background: #4a63ae;
}
.ig {
  background: #0078d7;
}
.ig-line {
  fill: none;
  stroke: #fff;
  stroke-width: 2;
}
.copyright {
  margin-top: 85px;
  text-align: center;
  font-size: 20px;
  font-weight: 700;
  line-height: 28px;
  color: #555;
}
.to-top {
  position: absolute;
  left: 1820px;
  top: 2803px;
  width: 50px;
  height: 50px;
  border-radius: 50%;
  display: flex;
  align-items: center;
  justify-content: center;
  background: #e9e1c6;
  box-shadow: 0 0 40px rgba(0, 0, 0, .05);
}
.to-top svg {
  width: 13px;
  height: 8px;
}
.to-top path {
  fill: none;
  stroke: #fff;
  stroke-width: 2;
}
```
